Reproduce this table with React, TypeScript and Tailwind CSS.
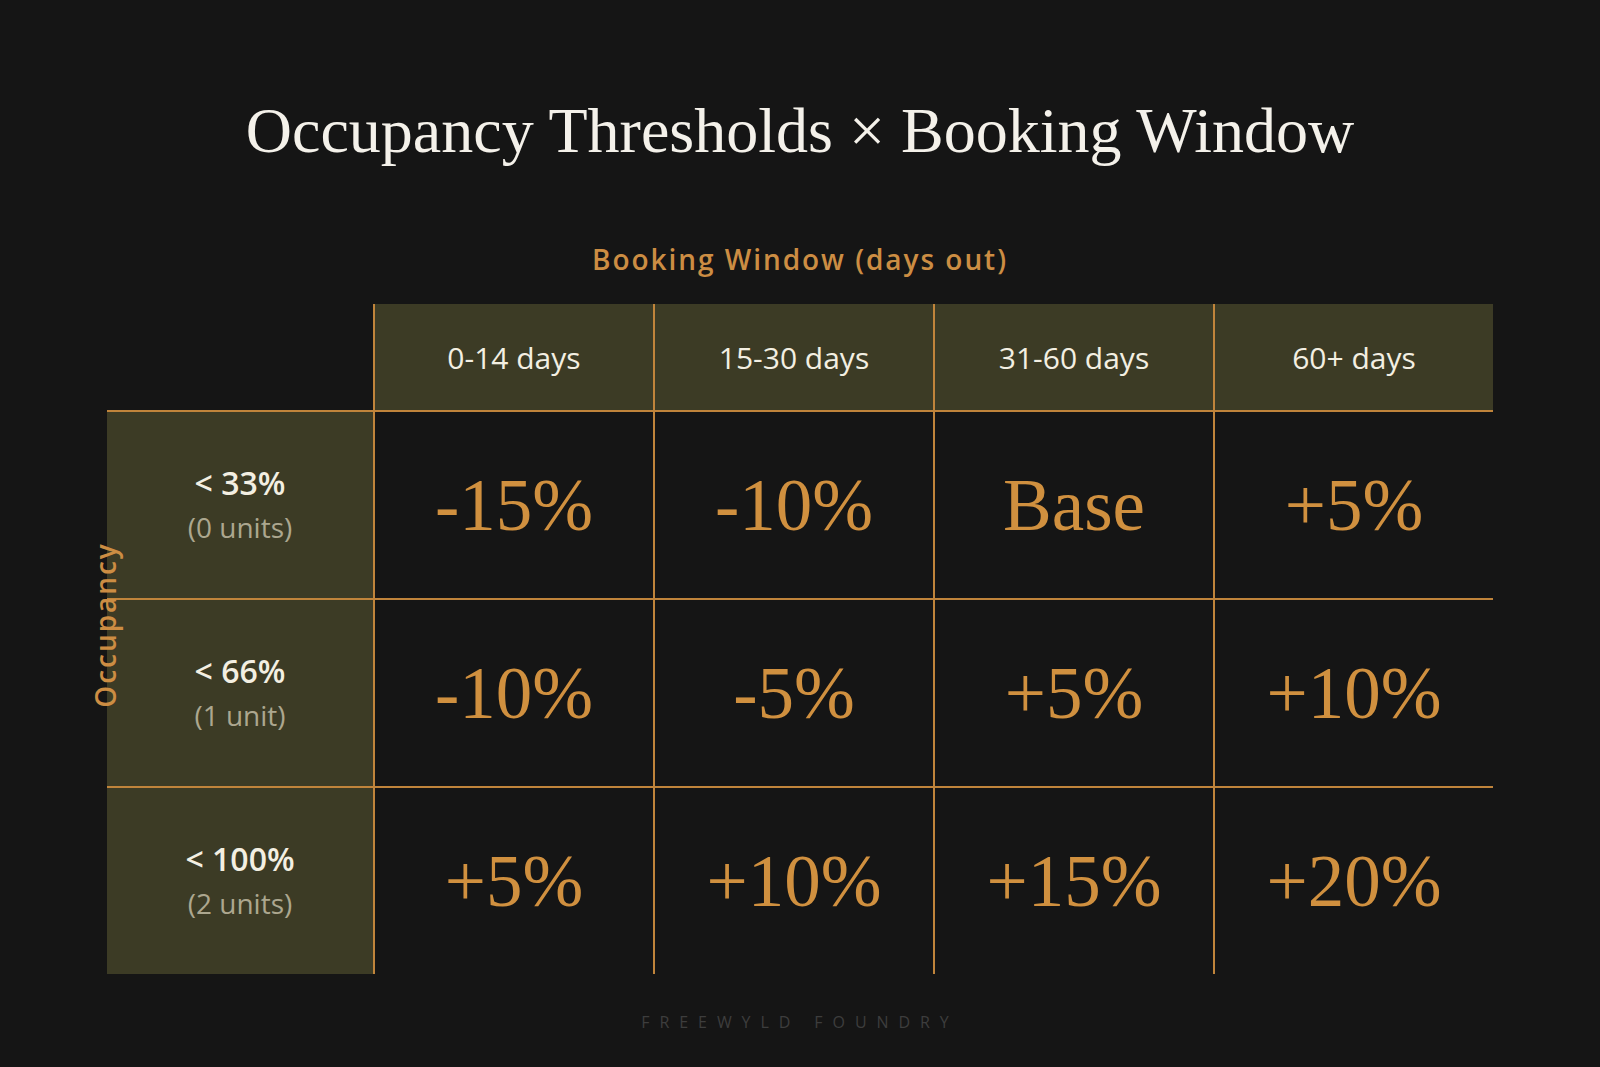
const columns = ["0-14 days", "15-30 days", "31-60 days", "60+ days"];

const rows = [
  { label: "< 33%", units: "(0 units)", values: ["-15%", "-10%", "Base", "+5%"] },
  { label: "< 66%", units: "(1 unit)", values: ["-10%", "-5%", "+5%", "+10%"] },
  { label: "< 100%", units: "(2 units)", values: ["+5%", "+10%", "+15%", "+20%"] },
];

export default function App() {
  return (
    <div className="w-full h-[1067px] bg-[#151515] flex flex-col items-center font-['Open_Sans',sans-serif]">
      {/* Title */}
      <h1 className="mt-[99px] text-[64px] leading-[64px] text-[#f4f1ea] font-['Liberation_Serif',serif] font-normal">
        Occupancy Thresholds × Booking Window
      </h1>

      <div className="mt-[82px] text-[28px] leading-[28px] font-semibold tracking-[0.07em] text-[#cc8d43]">
        Booking Window (days out)
      </div>

      {/* Matrix */}
      <div className="relative mt-[31px] w-[1386px]">
        <div className="absolute left-[-2px] top-[321px] -translate-x-1/2 -translate-y-1/2 -rotate-90 whitespace-nowrap text-[28px] leading-[28px] font-semibold tracking-[0.07em] text-[#cc8d43]">
          Occupancy
        </div>

        <div className="grid grid-cols-[266px_repeat(4,minmax(0,1fr))]">
          {/* header row */}
          <div className="h-[106px]" />
          {columns.map((c) => (
            <div
              key={c}
              className="h-[106px] bg-[#3c3b25] border-l-2 border-[#c0843b] flex items-center justify-center text-[30px] font-medium text-[#f3efe2]"
            >
              {c}
            </div>
          ))}

          {rows.map((r) => (
            <div key={r.label} className="contents">
              <div className="h-[188px] bg-[#3c3b25] border-t-2 border-[#c0843b] flex flex-col items-center justify-center">
                <span className="text-[32px] leading-[44px] font-semibold text-[#f3efe2]">{r.label}</span>
                <span className="text-[28px] leading-[44px] text-[#aca78f]">{r.units}</span>
              </div>
              {r.values.map((v, i) => (
                <div
                  key={i}
                  className="h-[188px] border-t-2 border-l-2 border-[#c0843b] flex items-center justify-center text-[73px] leading-none text-[#d0903f] font-['Liberation_Serif',serif]"
                >
                  {v}
                </div>
              ))}
            </div>
          ))}
        </div>
      </div>

      <div className="mt-[40px] text-[16px] leading-[16px] tracking-[0.62em] text-[#3d3d3d]">
        FREEWYLD FOUNDRY
      </div>
    </div>
  );
}
